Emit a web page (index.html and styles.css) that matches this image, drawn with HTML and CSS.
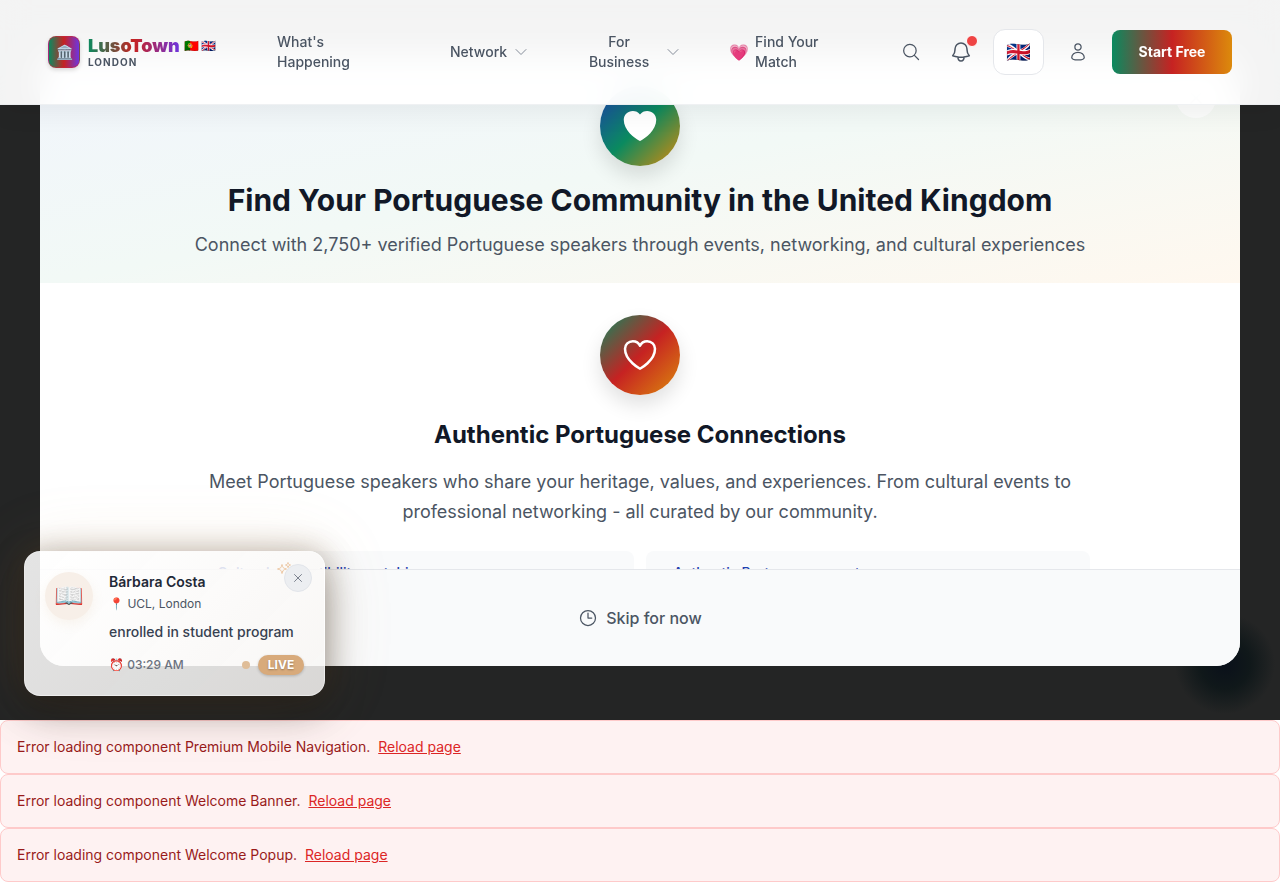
FILE: index.html
```html
<!DOCTYPE html>
<html lang="en">
<head>
<meta charset="utf-8">
<meta name="viewport" content="width=device-width, initial-scale=1">
<title>LusoTown London</title>
<link rel="stylesheet" href="styles.css">
</head>
<body>
<header class="site-header">
  <a class="brand" href="#">
    <span class="brand-mark">🏛️</span>
    <span class="brand-text">
      <span class="brand-row"><span class="brand-name">LusoTown</span><span class="brand-flags"><span>🇵🇹</span><span>🇬🇧</span></span></span>
      <span class="brand-city">LONDON</span>
    </span>
  </a>
  <nav class="nav">
    <a class="nav-item nav-events" href="#">What's Happening</a>
    <button class="nav-item nav-network" type="button">Network
      <svg class="chevron" viewBox="0 0 24 24"><path d="m19.5 8.25-7.5 7.5-7.5-7.5"/></svg></button>
    <button class="nav-item nav-business" type="button"><span>For Business</span>
      <svg class="chevron" viewBox="0 0 24 24"><path d="m19.5 8.25-7.5 7.5-7.5-7.5"/></svg></button>
    <a class="nav-item nav-match" href="#"><span class="nav-heart">💗</span><span>Find Your Match</span></a>
  </nav>
  <div class="actions">
    <button class="icon-btn" type="button" aria-label="Search"><svg class="icon" viewBox="0 0 24 24"><path d="m21 21-5.2-5.2m0 0A7.5 7.5 0 1 0 5.2 5.2a7.5 7.5 0 0 0 10.6 10.6Z"/></svg></button>
    <button class="icon-btn bell" type="button" aria-label="Notifications"><svg class="icon icon-lg" viewBox="0 0 24 24"><path d="M14.86 17.08a23.85 23.85 0 0 0 5.45-1.31A8.97 8.97 0 0 1 18 9.75V9A6 6 0 0 0 6 9v.75a8.97 8.97 0 0 1-2.31 6.02c1.73.64 3.56 1.08 5.45 1.31m5.72 0a24.26 24.26 0 0 1-5.72 0m5.72 0a3 3 0 1 1-5.72 0"/></svg><span class="dot"></span></button>
    <button class="lang" type="button" aria-label="Language">🇬🇧</button>
    <button class="icon-btn" type="button" aria-label="Account"><svg class="icon" viewBox="0 0 24 24"><path d="M15.75 6a3.75 3.75 0 1 1-7.5 0 3.75 3.75 0 0 1 7.5 0ZM4.5 18.5a7.5 6.2 0 0 1 15 0c0 1.9-3.5 3-7.5 3s-7.5-1.1-7.5-3Z"/></svg></button>
    <a class="cta" href="#">Start Free</a>
  </div>
</header>

<div class="stage">
  <section class="modal">
    <div class="hero">
      <button class="modal-close" type="button" aria-label="Close"><svg class="icon" viewBox="0 0 24 24"><path d="M6 18 18 6M6 6l12 12"/></svg></button>
      <span class="disc disc-hero"><svg viewBox="0 0 24 24"><path d="m11.65 20.91c-3-1.6-9.4-6.5-9.4-12.66 0-3 2.44-5.25 5.44-5.25A5.5 5.5 0 0 1 12 5.05 5.5 5.5 0 0 1 16.31 3c3 0 5.44 2.25 5.44 5.25 0 6.16-6.4 11.06-9.4 12.66a.75.75 0 0 1-.7 0Z"/></svg></span>
      <h1 class="hero-title">Find Your Portuguese Community in the United Kingdom</h1>
      <p class="hero-sub">Connect with 2,750+ verified Portuguese speakers through events, networking, and cultural experiences</p>
    </div>
    <div class="step">
      <span class="disc disc-step"><svg viewBox="0 0 24 24"><path d="M21 8.25c0-2.49-2.1-4.5-4.69-4.5-1.93 0-3.6 1.13-4.31 2.73-.71-1.6-2.38-2.73-4.31-2.73C5.1 3.75 3 5.76 3 8.25c0 7.22 9 12 9 12s9-4.78 9-12Z"/></svg></span>
      <h2 class="step-title">Authentic Portuguese Connections</h2>
      <p class="step-text">Meet Portuguese speakers who share your heritage, values, and experiences. From cultural events to professional networking - all curated by our community.</p>
      <ul class="features">
        <li>• Cultural compatibility matching</li>
        <li>• Authentic Portuguese events</li>
      </ul>
    </div>
    <div class="modal-foot">
      <button class="skip" type="button"><svg class="icon" viewBox="0 0 24 24"><path d="M12 6v6h4.5m4.5 0a9 9 0 1 1-18 0 9 9 0 0 1 18 0Z"/></svg>Skip for now</button>
    </div>
  </section>
</div>

<div class="errors">
  <div class="error">Error loading component Premium Mobile Navigation. <a href="#">Reload page</a></div>
  <div class="error">Error loading component Welcome Banner. <a href="#">Reload page</a></div>
  <div class="error">Error loading component Welcome Popup. <a href="#">Reload page</a></div>
</div>

<aside class="toast">
  <span class="toast-avatar">📖</span>
  <div class="toast-body">
    <strong class="toast-name">Bárbara Costa</strong>
    <span class="toast-place">📍 UCL, London</span>
    <span class="toast-action">enrolled in student program</span>
    <div class="toast-meta"><span class="toast-time">⏰ 03:29 AM</span><span class="live-dot"></span><span class="live">LIVE</span></div>
  </div>
  <svg class="sparkle" viewBox="0 0 24 24"><path d="M9.8 15.9 9 18.75l-.8-2.85a4.5 4.5 0 0 0-3.1-3.1L2.25 12l2.85-.8a4.5 4.5 0 0 0 3.1-3.1L9 5.25l.8 2.85a4.5 4.5 0 0 0 3.1 3.1l2.85.8-2.85.8a4.5 4.5 0 0 0-3.1 3.1ZM18.26 8.7 18 9.75l-.26-1.05a3.4 3.4 0 0 0-2.45-2.45L14.25 6l1.04-.26a3.4 3.4 0 0 0 2.45-2.45L18 2.25l.26 1.04a3.4 3.4 0 0 0 2.45 2.45L21.75 6l-1.04.26a3.4 3.4 0 0 0-2.45 2.45ZM16.9 20.6l-.4 1.15-.4-1.15a2.25 2.25 0 0 0-1.4-1.4l-1.2-.45 1.2-.4a2.25 2.25 0 0 0 1.4-1.4l.4-1.2.4 1.2a2.25 2.25 0 0 0 1.4 1.4l1.2.4-1.2.4a2.25 2.25 0 0 0-1.4 1.45Z"/></svg>
  <button class="toast-close" type="button" aria-label="Dismiss"><svg viewBox="0 0 24 24"><path d="M6 18 18 6M6 6l12 12"/></svg></button>
</aside>
</body>
</html>
```
FILE: styles.css
```css
* { box-sizing: border-box; }
body { margin: 0; position: relative; background: #fff; color: #111827; font-family: Inter, "Liberation Sans", sans-serif; font-size: 14px; line-height: 20px; }
a { color: inherit; text-decoration: none; }
button { font: inherit; color: inherit; background: none; border: 0; padding: 0; cursor: pointer; }
h1, h2, p, ul { margin: 0; padding: 0; }
svg { fill: none; stroke: currentColor; stroke-width: 1.5; stroke-linecap: round; stroke-linejoin: round; flex: none; }

.site-header { position: absolute; inset: 0 0 auto; z-index: 5; display: flex; align-items: center; min-height: 105px; padding: 0 48px; background: rgba(255, 255, 255, .95); border-bottom: 1px solid rgba(229, 231, 235, .6); backdrop-filter: blur(16px); box-shadow: 0 8px 24px rgba(0, 0, 0, .06); color: #4b5563; }
.brand { display: flex; align-items: center; gap: 8px; flex: none; width: 170px; }
.brand-mark { display: grid; place-items: center; width: 32px; height: 32px; border: 1px solid rgba(200, 40, 60, .6); border-radius: 8px; background: linear-gradient(90deg, #0a8a5f, #c62222 50%, #6d35e0); font-size: 14px; box-shadow: 0 2px 4px rgba(0, 0, 0, .15); }
.brand-text { display: flex; flex-direction: column; }
.brand-row { display: flex; align-items: center; gap: 4px; }
.brand-name { font-size: 18px; line-height: 20px; font-weight: 900; background: linear-gradient(90deg, #0a8a5f, #c62222 50%, #6d35e0); -webkit-background-clip: text; background-clip: text; color: transparent; }
.brand-flags { display: flex; gap: 2px; font-size: 12px; line-height: 16px; }
.brand-city { font-size: 10px; line-height: 12px; font-weight: 700; letter-spacing: 1px; }
.nav { display: flex; align-items: center; flex: 1; margin-left: 59px; font-weight: 500; }
.nav-item { display: flex; align-items: center; gap: 4px; }
.nav-events { width: 93px; }
.nav-network { margin-left: 80px; gap: 6px; }
.nav-business { margin-left: 56px; gap: 12px; }
.nav-business span { width: 68px; }
.nav-match { margin-left: 48px; gap: 6px; }
.nav-match span:last-child { width: 80px; }
.nav-heart { font-size: 16px; }
.chevron { width: 16px; height: 16px; color: #858c99; }
.actions { display: flex; align-items: center; gap: 12px; flex: none; }
.icon-btn { position: relative; display: grid; place-items: center; width: 44px; height: 44px; }
.icon-btn + .icon-btn { margin-left: -6px; }
.bell + .lang { margin-left: -2px; }
.icon { width: 20px; height: 20px; }
.icon-lg { width: 24px; height: 24px; }
.dot { position: absolute; top: 5px; right: 5px; width: 12px; height: 12px; border: 1px solid #fff; border-radius: 50%; background: #ef4444; }
.lang { width: 51px; height: 46px; border: 1px solid #e5e7eb; border-radius: 12px; background: #fff; font-size: 20px; }
.cta { display: grid; place-items: center; width: 120px; height: 44px; border-radius: 8px; background: linear-gradient(90deg, #0a8a5f, #c62222 50%, #dc8a0c); color: #fff; font-weight: 700; }

.stage { min-height: 720px; padding: 54px 40px; background: radial-gradient(circle 50px at calc(100% - 55px) 664px, #0a101a, #10181a 50%, transparent), #242525; }
.modal { display: flex; flex-direction: column; height: 612px; overflow: hidden; border-radius: 24px; background: #fff; text-align: center; }
.hero { position: relative; display: flex; flex-direction: column; align-items: center; padding: 32px 32px 24px; background: linear-gradient(to bottom right, #f1f5fc, #f2f9f6 50%, #fff8ef); }
.modal-close { position: absolute; top: 24px; right: 24px; display: grid; place-items: center; width: 40px; height: 40px; border-radius: 50%; background: rgba(255, 255, 255, .7); color: #9ca3af; }
.disc { display: grid; place-items: center; flex: none; width: 80px; height: 80px; border-radius: 50%; color: #fff; box-shadow: 0 10px 20px rgba(0, 0, 0, .12); }
.disc svg { width: 40px; height: 40px; }
.disc-hero { background: linear-gradient(135deg, #1e40af, #0a8a5f 50%, #d98a0c); }
.disc-hero svg { fill: currentColor; stroke: none; }
.disc-step { background: linear-gradient(135deg, #0a8a5f, #c62222 50%, #dc8a0c); }
.hero-title { margin-top: 16px; font-size: 30px; line-height: 36px; font-weight: 700; }
.hero-sub { margin-top: 12px; font-size: 18px; line-height: 29px; color: #4b5563; }
.step { display: flex; flex-direction: column; align-items: center; flex: 1; min-height: 0; overflow: hidden; padding: 32px 32px 0; }
.step-title { margin-top: 24px; font-size: 24px; line-height: 32px; font-weight: 700; }
.step-text { max-width: 880px; margin-top: 16px; font-size: 18px; line-height: 30px; color: #4b5563; }
.features { display: grid; grid-template-columns: 1fr 1fr; gap: 12px; width: 100%; max-width: 900px; margin-top: 24px; list-style: none; text-align: left; }
.features li { padding: 12px 16px; border-radius: 8px; background: #f9fafb; color: #1e40af; font-weight: 500; }
.modal-foot { display: grid; place-items: center; padding: 24px; border-top: 1px solid #e5e7eb; background: #f9fafb; }
.skip { display: flex; align-items: center; gap: 8px; height: 48px; color: #4b5563; font-size: 16px; font-weight: 500; }

.error { padding: 16px; border: 1px solid #fecaca; border-radius: 8px; background: #fef2f2; color: #991b1b; }
.error a { margin-left: 4px; color: #dc2626; text-decoration: underline; }

.toast { position: absolute; left: 24px; top: 551px; z-index: 6; display: flex; gap: 16px; width: 301px; padding: 20px; border: 1px solid rgba(255, 255, 255, .4); border-radius: 16px; background: linear-gradient(135deg, rgba(255, 255, 255, .88), rgba(247, 245, 243, .86)); box-shadow: 0 16px 40px rgba(0, 0, 0, .3), 0 0 70px rgba(210, 160, 100, .15), 0 0 30px rgba(90, 55, 20, .25); }
.toast-avatar { display: grid; place-items: center; flex: none; width: 48px; height: 48px; border-radius: 50%; background: #f7efe8; font-size: 24px; box-shadow: 0 4px 12px rgba(216, 170, 123, .12); }
.toast-body { display: flex; flex-direction: column; flex: 1; }
.toast-name { font-weight: 600; color: #1f2937; }
.toast-place { margin-top: 4px; font-size: 12px; line-height: 16px; color: #4b5563; }
.toast-action { margin-top: 8px; font-weight: 500; color: #374151; line-height: 23px; }
.toast-meta { display: flex; align-items: center; gap: 8px; margin-top: 12px; }
.toast-time { margin-right: auto; font-size: 12px; font-weight: 500; color: #6b7280; }
.live-dot { width: 8px; height: 8px; border-radius: 50%; background: #dfbd98; }
.live { width: 46px; text-align: center; border-radius: 10px; background: #d8aa7b; color: #fff; font-size: 12px; font-weight: 700; box-shadow: 0 1px 3px rgba(0, 0, 0, .2); text-shadow: 0 1px 2px rgba(0, 0, 0, .3); }
.sparkle { position: absolute; top: 9px; right: 32px; width: 16px; height: 16px; color: #edc7a3; }
.toast-close { position: absolute; top: 12px; right: 12px; display: grid; place-items: center; width: 28px; height: 28px; border: 1px solid #e2e5ea; border-radius: 50%; background: #eceef1; color: #6b7280; }
.toast-close svg { width: 14px; height: 14px; }
```
